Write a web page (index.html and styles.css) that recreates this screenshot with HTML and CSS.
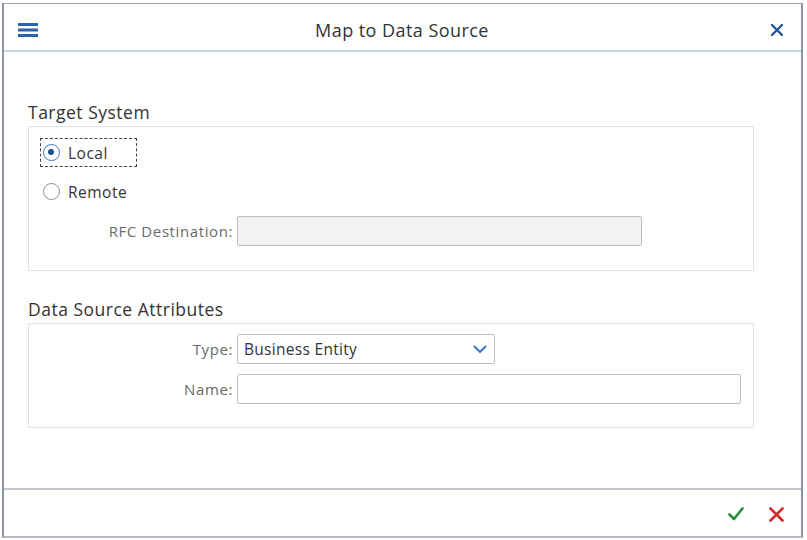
FILE: index.html
```html
<!DOCTYPE html>
<html>
<head>
<meta charset="utf-8">
<link rel="stylesheet" href="styles.css">
</head>
<body>
<div class="dialog">
  <header class="head">
    <button class="icon-btn menu" aria-label="Menu">
      <svg width="20" height="14" viewBox="0 0 20 14"><rect x="0" y="0" width="20" height="3" fill="#2a64ad"/><rect x="0" y="5.5" width="20" height="3" fill="#2a64ad"/><rect x="0" y="11" width="20" height="3" fill="#2a64ad"/></svg>
    </button>
    <div class="title">Map to Data Source</div>
    <button class="icon-btn close" aria-label="Close">
      <svg width="12" height="12" viewBox="0 0 12 12"><path d="M1 1 L11 11 M11 1 L1 11" stroke="#24589e" stroke-width="2.4" stroke-linecap="round"/></svg>
    </button>
  </header>
  <main class="body">
    <section class="group">
      <h2 class="group-title">Target System</h2>
      <div class="box box-target">
        <label class="radio focused"><span class="rb checked"></span>Local</label>
        <label class="radio"><span class="rb"></span>Remote</label>
        <div class="row">
          <span class="lbl">RFC Destination:</span>
          <span class="input disabled rfc"></span>
        </div>
      </div>
    </section>
    <section class="group second">
      <h2 class="group-title">Data Source Attributes</h2>
      <div class="box box-attr">
        <div class="row">
          <span class="lbl">Type:</span>
          <span class="input select">Business Entity
            <svg class="chev" width="14" height="9" viewBox="0 0 14 9"><path d="M1.5 1.5 L7 7 L12.5 1.5" fill="none" stroke="#3a78c4" stroke-width="2" stroke-linecap="round" stroke-linejoin="round"/></svg>
          </span>
        </div>
        <div class="row">
          <span class="lbl">Name:</span>
          <span class="input name"></span>
        </div>
      </div>
    </section>
  </main>
  <footer class="foot">
    <button class="icon-btn ok" aria-label="OK">
      <svg width="16" height="14" viewBox="0 0 16 14"><path d="M1.5 7.5 L6 12 L14.5 1.5" fill="none" stroke="#2b8a3e" stroke-width="2.6" stroke-linecap="round" stroke-linejoin="round"/></svg>
    </button>
    <button class="icon-btn cancel" aria-label="Cancel">
      <svg width="15" height="15" viewBox="0 0 15 15"><path d="M1.5 1.5 L13.5 13.5 M13.5 1.5 L1.5 13.5" stroke="#d02b2b" stroke-width="2.6" stroke-linecap="round"/></svg>
    </button>
  </footer>
</div>
</body>
</html>
```

FILE: styles.css
```css
html, body {
  margin: 0;
  padding: 0;
  background: #ffffff;
}
body {
  font-family: "Open Sans", "Noto Sans", sans-serif;
  color: #333;
}
.dialog {
  margin: 3px 0 0 2px;
  width: 801px;
  height: 535px;
  border-top: 1px solid #9aa3ad;
  border-left: 2px solid #8b94a0;
  border-right: 2px solid #8b94a0;
  border-bottom: 2px solid #b4bac1;
  display: flex;
  flex-direction: column;
  box-sizing: border-box;
}
.head {
  height: 40px;
  padding: 6px 17px 0 14px;
  border-bottom: 2px solid #c9d4e0;
  display: flex;
  align-items: center;
  flex: none;
}
.icon-btn {
  border: 0;
  background: none;
  padding: 0;
  display: flex;
  align-items: center;
  justify-content: center;
}
.menu { width: 20px; height: 20px; }
.close { width: 14px; height: 14px; }
.title {
  flex: 1;
  text-align: center;
  font-size: 18px;
  letter-spacing: 0.45px;
  color: #333;
  padding-right: 4px;
}
.body {
  flex: 1;
  padding: 49px 0 0 24px;
}
.group { width: 726px; }
.group.second { margin-top: 27px; }
.group-title {
  margin: 0 0 3px 0;
  font-size: 17.5px;
  letter-spacing: 0.5px;
  font-weight: normal;
  color: #333;
  line-height: 22px;
}
.box {
  border: 1px solid #e3e3e3;
  box-sizing: border-box;
}
.box-target {
  height: 145px;
  padding: 11px 0 0 11px;
}
.box-attr {
  height: 105px;
  padding: 10px 0 0 0;
}
.radio {
  display: flex;
  align-items: center;
  font-size: 15.5px;
  letter-spacing: 0.5px;
  color: #333;
  height: 29px;
  width: 97px;
  box-sizing: border-box;
  padding-left: 2px;
  border: 1px solid transparent;
}
.radio.focused {
  border: 1px dashed #444;
}
.radio + .radio { margin-top: 10px; }
.rb {
  width: 17px;
  height: 17px;
  border-radius: 50%;
  border: 1px solid #8a8f96;
  box-sizing: border-box;
  margin-right: 8px;
  position: relative;
  flex: none;
}
.rb.checked {
  border: 1.5px solid #3b78c6;
}
.rb.checked::after {
  content: "";
  position: absolute;
  left: 4px;
  top: 4px;
  width: 6px;
  height: 6px;
  border-radius: 50%;
  background: #1d4f91;
}
.row {
  display: flex;
  align-items: center;
  height: 30px;
}
.box-target .row { margin-top: 10px; margin-left: -11px; }
.box-attr .row + .row { margin-top: 10px; }
.lbl {
  width: 208px;
  text-align: right;
  padding-right: 4px;
  box-sizing: border-box;
  font-size: 15px;
  letter-spacing: 0.6px;
  color: #6a6a6a;
}
.input {
  height: 30px;
  box-sizing: border-box;
  border: 1px solid #b9bfc6;
  border-radius: 2px;
  background: #fff;
  display: flex;
  align-items: center;
  font-size: 15.5px;
  letter-spacing: 0.3px;
  color: #333;
  padding-left: 6px;
}
.input.disabled {
  background: #f2f2f2;
}
.rfc { width: 405px; }
.select { width: 258px; position: relative; }
.select .chev { margin-left: auto; margin-right: 7px; }
.name { width: 504px; }
.foot {
  height: 44px;
  border-top: 2px solid #c2c8cf;
  flex: none;
  display: flex;
  align-items: center;
  justify-content: flex-end;
  gap: 25px;
  padding: 2px 17px 0 0;
}
.ok { width: 16px; height: 14px; }
.cancel { width: 15px; height: 15px; }
```
